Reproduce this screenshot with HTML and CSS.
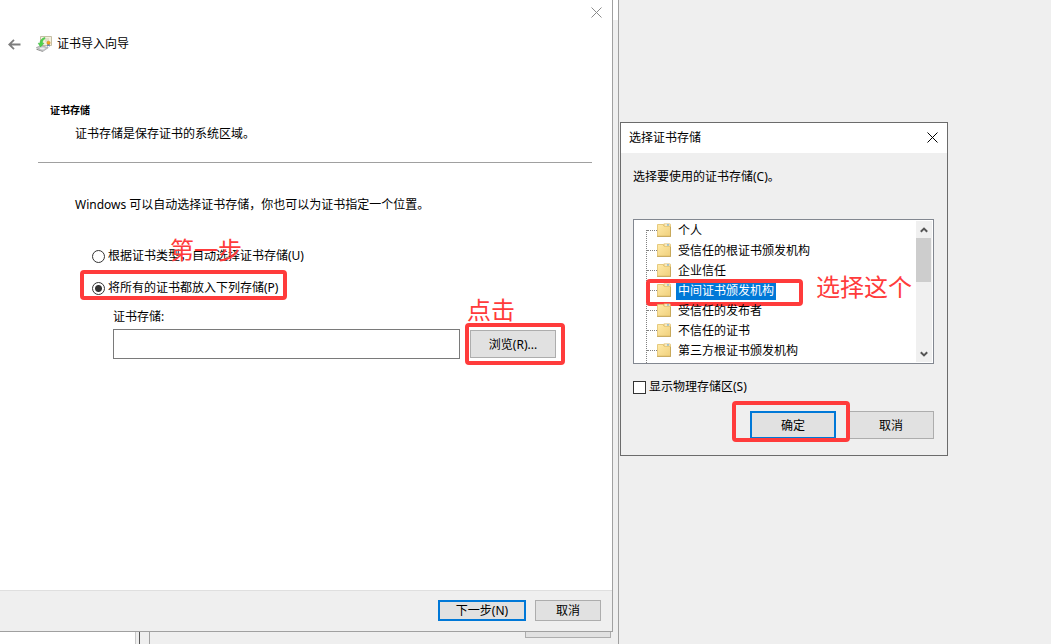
FILE: index.html
```html
<!DOCTYPE html>
<html lang="zh-CN">
<head>
<meta charset="utf-8">
<title>证书导入向导</title>
<link rel="stylesheet" href="styles.css">
</head>
<body>
<svg class="defs" aria-hidden="true">
  <defs>
    <linearGradient id="manila" x1="0" y1="0" x2="1" y2="1">
      <stop offset="0" stop-color="#ffeaa8"/>
      <stop offset="1" stop-color="#f0d07c"/>
    </linearGradient>
    <symbol id="folder" viewBox="0 0 14 14">
      <path d="M6 3.500V1.500L7 .5h6l.7 1V5H6z" fill="#e0bd68"/>
      <path d="M7.500 1.300h5.300v2H7.500z" fill="#fff8dc"/>
      <path d="M10 1.400h2v1h-2z" fill="#4d9be0"/>
      <path d="M.5 1.500h5.500l1 1.700h6.500v10.100H.5z" fill="url(#manila)" stroke="#e0bf68" stroke-width=".8"/>
      <path d="M0 13.400h14M13.500 4v9" stroke="#c4a558" stroke-width=".9" fill="none"/>
    </symbol>
  </defs>
</svg>
<main class="desktop">
  <div class="back-window">
    <div class="back-pane"></div>
    <div class="back-divider"></div>
    <div class="back-button"></div>
  </div>

  <section class="wizard" aria-label="证书导入向导">
    <button class="close wizard-close" aria-label="关闭">
      <svg viewBox="0 0 11 11"><path d="M.5.5l10 10M10.5.5l-10 10"/></svg>
    </button>
    <header class="wizard-title">
      <button class="back" aria-label="返回">
        <svg viewBox="0 0 13 11"><path d="M6 .8L1.2 5.5 6 10.2M1.2 5.5H12.5"/></svg>
      </button>
      <svg class="cert-icon" viewBox="0 0 16 16" aria-hidden="true">
        <path d="M4.500.5h11v9h-11z" fill="#f4f1df" stroke="#c5bfa5"/>
        <path d="M8 3h5M9 5h4" stroke="#d2cbb4"/>
        <path d="M.3 11.500l5-2 7 2.200-5.300 3.600z" fill="#c6c8ca" stroke="#999" stroke-width=".6"/>
        <path d="M.5 12.500l6.500 2.900v.6L.5 13.700z" fill="#888"/>
        <ellipse cx="6.300" cy="12.500" rx="2.600" ry="1.100" fill="#eee"/>
        <path d="M8.800 1.500C6 2 4 4.500 4 7.200H2.200L4.500 11 8 7.200H6.300C6.400 5 7.400 3.300 9.200 2.300z" fill="#4ed44b" stroke="#35b438" stroke-width=".5"/>
        <path d="M11.400 7.500l-.4 3.300 1.500-1 1.300 1-.2-3.300z" fill="#5a7cb8"/>
        <circle cx="12.500" cy="6.800" r="1.600" fill="#f3a81c" stroke="#d58410" stroke-width=".6"/>
      </svg>
      <span>证书导入向导</span>
    </header>

    <div class="wizard-head">
      <h1>证书存储</h1>
      <p>证书存储是保存证书的系统区域。</p>
    </div>

    <div class="wizard-body">
      <p class="intro">Windows 可以自动选择证书存储，你也可以为证书指定一个位置。</p>
      <label class="option">
        <input type="radio" name="store">
        <span>根据证书类型，自动选择证书存储(U)</span>
        <span class="note note-step">第一步</span>
      </label>
      <label class="option">
        <input type="radio" name="store" checked>
        <span>将所有的证书都放入下列存储(P)</span>
        <span class="mark mark-option"></span>
      </label>
      <div class="store">
        <label for="store-name">证书存储:</label>
        <div class="store-row">
          <input id="store-name" type="text">
          <div class="marked">
            <button class="btn btn-large">浏览(R)...</button>
            <span class="mark mark-browse"></span>
            <span class="note note-click">点击</span>
          </div>
        </div>
      </div>
    </div>

    <footer class="wizard-foot">
      <button class="btn btn-next btn-default">下一步(N)</button>
      <button class="btn btn-cancel">取消</button>
    </footer>
  </section>

  <section class="dialog" role="dialog" aria-labelledby="dialog-title">
    <header class="dialog-title">
      <span id="dialog-title">选择证书存储</span>
      <button class="close" aria-label="关闭">
        <svg viewBox="0 0 11 11"><path d="M.5.5l10 10M10.5.5l-10 10"/></svg>
      </button>
    </header>
    <div class="dialog-body">
      <p>选择要使用的证书存储(C)。</p>
      <div class="list">
        <ul class="tree">
          <li><svg><use href="#folder"/></svg><span>个人</span></li>
          <li><svg><use href="#folder"/></svg><span>受信任的根证书颁发机构</span></li>
          <li><svg><use href="#folder"/></svg><span>企业信任</span></li>
          <li><svg><use href="#folder"/></svg><span class="selected">中间证书颁发机构</span><span class="mark mark-item"></span><span class="note note-choose">选择这个</span></li>
          <li><svg><use href="#folder"/></svg><span>受信任的发布者</span></li>
          <li><svg><use href="#folder"/></svg><span>不信任的证书</span></li>
          <li><svg><use href="#folder"/></svg><span>第三方根证书颁发机构</span></li>
        </ul>
        <div class="scroll">
          <svg viewBox="0 0 8 6"><path d="M.8 4.800L4 1.600l3.200 3.200"/></svg>
          <div class="thumb"></div>
          <svg viewBox="0 0 8 6"><path d="M.8 1.200L4 4.400l3.200-3.200"/></svg>
        </div>
      </div>
      <label class="check"><input type="checkbox"><span>显示物理存储区(S)</span></label>
      <div class="actions">
        <div class="marked">
          <button class="btn btn-large btn-default">确定</button>
          <span class="mark mark-ok"></span>
        </div>
        <button class="btn btn-large">取消</button>
      </div>
    </div>
  </section>
</main>
</body>
</html>
```
FILE: styles.css
```css
* { box-sizing: border-box; }

body {
  margin: 0;
  background: #efefef;
  color: #000;
  font: 12px/20px "Noto Sans", "Noto Sans CJK SC", sans-serif;
}

h1, p, ul { margin: 0; padding: 0; }

button, input { font: inherit; color: inherit; margin: 0; }

.defs { position: absolute; width: 0; height: 0; }

.desktop {
  position: relative;
  min-height: 100vh;
  overflow: hidden;
}

/* Window showing behind the wizard */
.back-window {
  position: absolute;
  inset: 0 432px 0 0;
  border-right: 1px solid #a0a0a0;
  background: linear-gradient(#fff 20px, #efefef 20px);
}

.back-pane {
  position: absolute;
  left: 0;
  bottom: 0;
  width: 136px;
  height: 14px;
  border-right: 1px solid #c8c8c8;
  background: #fff;
}

.back-divider {
  position: absolute;
  left: 139px;
  bottom: 0;
  width: 11px;
  height: 14px;
  border-left: 1px solid #555;
  border-right: 1px solid #a0a0a0;
}

.back-button {
  position: absolute;
  right: 7px;
  bottom: 6px;
  width: 86px;
  height: 20px;
  border: 1px solid #adadad;
  background: #e1e1e1;
}

/* Buttons */
.btn {
  padding: 0;
  height: 21px;
  line-height: 17px;
  border: 1px solid #adadad;
  background: #e1e1e1;
}

.btn-large { display: block; width: 86px; height: 28px; }
.btn-next { width: 88px; }
.btn-cancel { width: 66px; }
.btn-default { border: 2px solid #0078d7; }

.close, .back {
  display: flex;
  padding: 0;
  border: 0;
  background: none;
}

.close svg { width: 11px; height: 11px; }
.close path { stroke: #000; stroke-width: 1; fill: none; }
.back svg { width: 13px; height: 11px; }
.back path { stroke: #7d7d7d; stroke-width: 1.8; fill: none; }

/* Wizard */
.wizard {
  position: absolute;
  inset: 0 438px 12px 0;
  display: flex;
  flex-direction: column;
  border: solid #a0a0a0;
  border-width: 0 1px 1px 0;
  background: #fff;
}

.wizard-close { align-self: flex-end; margin: 7px 10px 0 0; }
.wizard-close path { stroke: #8a8a8a; }

.wizard-title {
  display: flex;
  align-items: center;
  margin-top: 16px;
  padding-left: 8px;
}

.cert-icon { width: 16px; height: 16px; margin: 0 5px 0 15px; }

.wizard-head {
  margin: 46px 20px 0 38px;
  padding: 0 0 18px 12px;
  border-bottom: 1px solid #a0a0a0;
}

.wizard-head h1 { font-size: 10px; line-height: 20px; }
.wizard-head p { margin-top: 4px; padding-left: 25px; }

.wizard-body { flex: 1; padding: 32px 56px 0 75px; }

.option {
  position: relative;
  display: flex;
  align-items: center;
  gap: 3px;
  width: max-content;
  margin: 12px 0 0 17px;
}

.intro + .option { margin-top: 31px; }

.option input {
  appearance: none;
  width: 13px;
  height: 13px;
  border: 1px solid #333;
  border-radius: 50%;
  background: #fff;
}

.option input:checked { background: radial-gradient(circle, #333 3px, #fff 4px); }

.store { margin: 9px 0 0 38px; }
.store label { display: block; }
.store-row { display: flex; align-items: center; gap: 10px; margin-top: 2px; }

.store-row input {
  flex: 1;
  min-width: 0;
  height: 30px;
  border: 1px solid #7a7a7a;
  background: #fff;
}

.wizard-foot {
  display: flex;
  justify-content: flex-end;
  gap: 9px;
  padding: 9px 11px 10px;
  border-top: 1px solid #dfdfdf;
  background: #efefef;
}

/* Store picker */
.dialog {
  position: absolute;
  top: 122px;
  right: 103px;
  width: 328px;
  border: 1px solid #6b6b6b;
  background: #efefef;
}

.dialog-title {
  display: flex;
  justify-content: space-between;
  align-items: center;
  padding: 5px 9px 5px 8px;
  background: #fff;
}

.dialog-title .close { margin-bottom: 2px; }

.dialog-body { padding: 14px 13px 16px 12px; }

.list {
  display: flex;
  height: 145px;
  margin-top: 32px;
  padding-right: 1px;
  border: 1px solid #828790;
  background: #fff;
}

.tree {
  position: relative;
  flex: 1;
  list-style: none;
}

.tree::before {
  content: "";
  position: absolute;
  left: 12px;
  top: 10px;
  bottom: 0;
  border-left: 1px dotted #808080;
}

.tree li {
  position: relative;
  display: flex;
  align-items: center;
  height: 20px;
  padding-left: 13px;
}

.tree li::before {
  content: "";
  width: 10px;
  border-top: 1px dotted #808080;
}

.tree svg { width: 14px; height: 14px; margin-right: 5px; }
.tree li > span:not(.mark):not(.note) { margin-top: 2px; padding: 0 2px; line-height: 18px; }
.tree .selected { background: #0078d7; color: #fff; }

.scroll {
  display: flex;
  flex-direction: column;
  align-items: center;
  width: 16px;
  margin: 1px 0;
  padding: 6px 0 5px;
  background: #f0f0f0;
}

.scroll svg { width: 8px; height: 6px; }
.scroll path { fill: none; stroke: #555; stroke-width: 2; }
.thumb { width: 15px; height: 44px; margin: 5px 1px auto 0; background: #cdcdcd; }

.check {
  display: flex;
  align-items: center;
  gap: 3px;
  width: max-content;
  margin-top: 13px;
}

.check input {
  appearance: none;
  width: 13px;
  height: 13px;
  border: 1px solid #333;
  background: #fff;
}

.actions { display: flex; justify-content: flex-end; gap: 12px; margin-top: 14px; }

/* Red annotations */
.marked { position: relative; }

.mark {
  position: absolute;
  border: 4px solid #ff3b3b;
  border-radius: 4px;
  pointer-events: none;
}

.mark-option { inset: -8px auto -2px -12px; width: 207px; }
.mark-browse { inset: -7px -9px -7px -5px; }
.mark-item { left: 12px; top: -1px; width: 157px; height: 27px; }
.mark-ok { inset: -10px -14px -3px -18px; }

.note {
  position: absolute;
  color: #ff3b3b;
  font-size: 24px;
  line-height: 28px;
  white-space: nowrap;
  pointer-events: none;
}

.note-step { left: 78px; top: -10px; }
.note-click { left: -3px; top: -34px; }
.note-choose { left: 182px; top: -7px; z-index: 1; }
```
